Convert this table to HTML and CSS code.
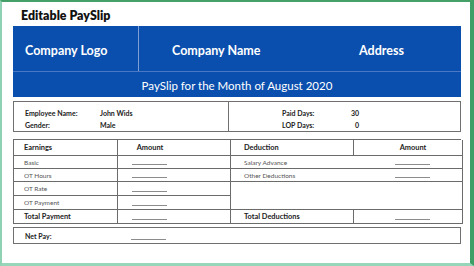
FILE: index.html
```html
<!DOCTYPE html>
<html>
<head>
<meta charset="utf-8">
<link rel="stylesheet" href="styles.css">
</head>
<body>
<div class="frame">
  <h1 class="title">Editable PaySlip</h1>
  <section class="banner">
    <div class="banner-top">
      <div class="cell logo">Company Logo</div>
      <div class="cell name">Company Name</div>
      <div class="cell addr">Address</div>
    </div>
    <div class="banner-sub">PaySlip for the Month of August 2020</div>
  </section>

  <section class="emp">
    <div class="emp-col left">
      <div class="emp-row"><span class="lbl">Employee Name:</span><span class="val">John Wids</span></div>
      <div class="emp-row"><span class="lbl">Gender:</span><span class="val">Male</span></div>
    </div>
    <div class="emp-col right">
      <div class="emp-row"><span class="lbl">Paid Days:</span><span class="val num">30</span></div>
      <div class="emp-row"><span class="lbl">LOP Days:</span><span class="val num">0</span></div>
    </div>
  </section>

  <section class="tbl">
    <div class="c h c1">Earnings</div>
    <div class="c h a1"><span class="amt">Amount</span></div>
    <div class="c h c3">Deduction</div>
    <div class="c h a2"><span class="amt">Amount</span></div>

    <div class="c c1">Basic</div>
    <div class="c a1"><span class="dash"></span></div>
    <div class="c c3 nr">Salary Advance</div>
    <div class="c a2"><span class="dash"></span></div>

    <div class="c c1">OT Hours</div>
    <div class="c a1"><span class="dash"></span></div>
    <div class="c c3 nr">Other Deductions</div>
    <div class="c a2"><span class="dash"></span></div>

    <div class="c c1">OT Rate</div>
    <div class="c a1"><span class="dash"></span></div>
    <div class="c blank"></div>

    <div class="c c1">OT Payment</div>
    <div class="c a1"><span class="dash"></span></div>

    <div class="c h c1">Total Payment</div>
    <div class="c a1"><span class="dash"></span></div>
    <div class="c h c3">Total Deductions</div>
    <div class="c a2"><span class="dash"></span></div>
  </section>

  <section class="net">
    <span class="net-lbl">Net Pay:</span><span class="dash"></span>
  </section>
</div>
</body>
</html>
```

FILE: styles.css
```css
* { box-sizing: border-box; }
html, body { margin: 0; padding: 0; }
body {
  width: 474px;
  height: 266px;
  background: #fff;
  font-family: "Lato", "Noto Sans", sans-serif;
  overflow: hidden;
}
.frame {
  width: 474px;
  height: 266px;
  border-top: 2px solid #45a067;
  border-left: 2px solid #8fd2b3;
  border-right: 4px solid #3d9f65;
  border-bottom: 3px solid #98d6b9;
  padding: 0 9px 0 11px;
}
.title {
  margin: 0;
  padding: 4px 0 0 8px;
  height: 24px;
  font-size: 12.4px;
  line-height: 20px;
  font-weight: 800;
  color: #111;
}
.banner {
  background: #0b4fae;
  color: #fff;
  height: 71px;
  display: flex;
  flex-direction: column;
}
.banner-top {
  height: 46px;
  display: grid;
  grid-template-columns: 126px 208px 1fr;
  border-bottom: 1px solid #4a78c4;
}
.banner-top .cell {
  display: flex;
  align-items: center;
  padding-top: 3px;
  font-size: 12.5px;
  font-weight: 700;
}
.logo { padding-left: 12px; border-right: 1px solid #7d9fd6; }
.name { padding-left: 33px; }
.addr { padding-left: 12px; }
.banner-sub {
  height: 25px;
  display: flex;
  align-items: center;
  justify-content: center;
  padding-top: 1px;
  font-size: 11.5px;
  font-weight: 400;
}

.emp {
  margin-top: 4px;
  height: 31px;
  border: 1px solid #707070;
  display: grid;
  grid-template-columns: 215px 1fr;
  font-size: 7px;
  font-weight: 700;
  color: #222;
}
.emp-col { padding-top: 5px; }
.emp-col.left { border-right: 1px solid #707070; padding-left: 11px; }
.emp-col.right { padding-left: 53px; }
.emp-row { height: 12px; display: flex; align-items: center; }
.left .lbl { width: 75px; }
.right .lbl { width: 55px; }
.num { width: 22px; text-align: right; }

.tbl {
  margin-top: 7px;
  display: grid;
  grid-template-columns: 104px 113px 123px 109px;
  grid-template-rows: 16px 13px 13px 14px 14px 14px;
  border-top: 1px solid #6b6b6b;
  border-left: 1px solid #6b6b6b;
  font-size: 6.5px;
  color: #555;
}
.c {
  border-right: 1px solid #6b6b6b;
  border-bottom: 1px solid #6b6b6b;
  display: flex;
  align-items: center;
}
.c.nr { border-right: none; }
.c.h { font-weight: 700; color: #222; font-size: 7.4px; }
.c1 { padding-left: 10px; }
.c3 { padding-left: 13px; }
.a1 { padding-left: 14px; }
.a2 { padding-left: 41px; }
.blank { grid-column: 3 / 5; grid-row: 4 / 6; }
.amt {
  width: 36px;
  text-align: center;
  font-weight: 700;
  color: #222;
  font-size: 7.4px;
}
.dash {
  display: block;
  width: 35px;
  align-self: flex-end;
  margin-bottom: 3px;
  border-bottom: 1px solid #8c8c8c;
}

.net {
  margin-top: 3px;
  height: 17px;
  border: 1px solid #707070;
  display: flex;
  align-items: center;
  padding-left: 11px;
  font-size: 7px;
  font-weight: 700;
  color: #222;
}
.net-lbl { width: 106px; }
```
